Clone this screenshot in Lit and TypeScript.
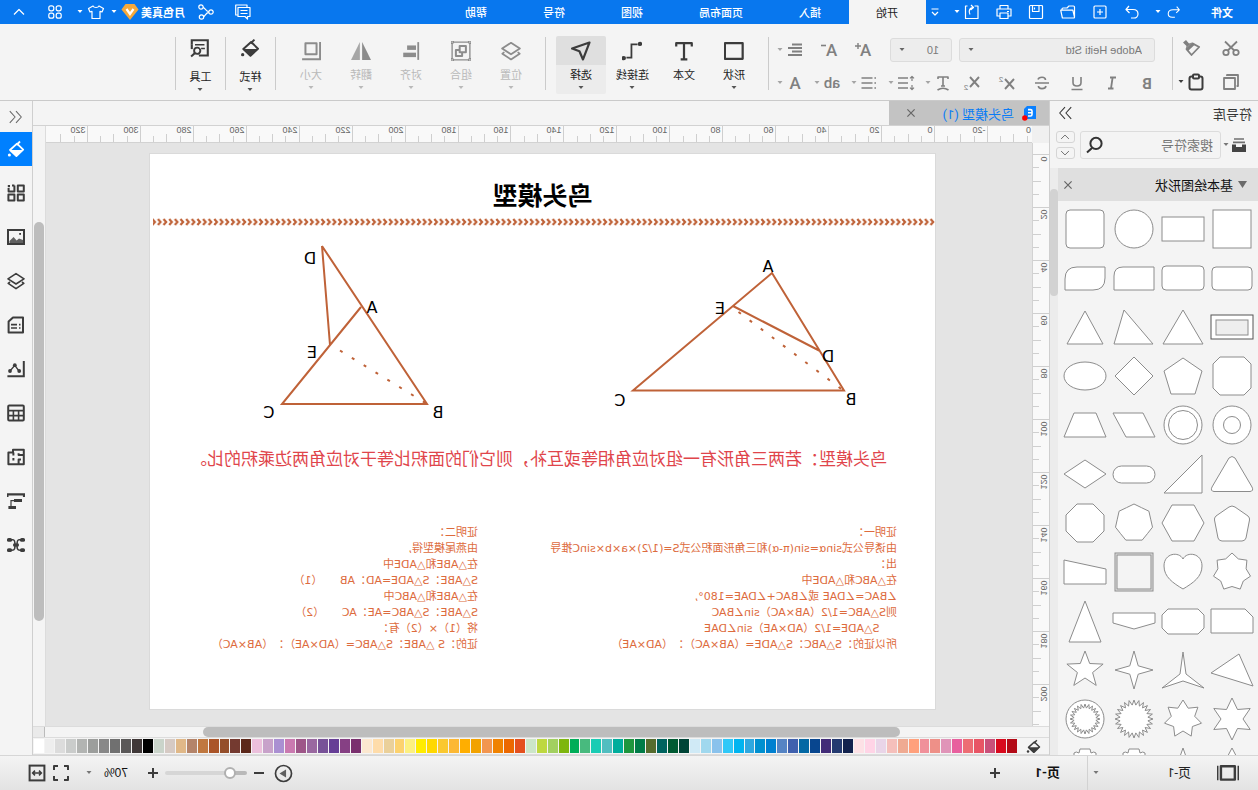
import { LitElement, html, svg, css, nothing } from "lit";
import { customElement, property, state } from "lit/decorators.js";
import { styleMap } from "lit/directives/style-map.js";
import { classMap } from "lit/directives/class-map.js";

/* ---------- icons ---------- */

const line = (w = 1.5) => (body: unknown) => svg`<g fill="none" stroke="currentColor" stroke-width=${w} stroke-linejoin="round">${body}</g>`;
const thin = line(1.2);
const mid = line(1.6);
const bold = line(2);

const bucket = svg`
  <path d="M5 1.5 L8.5 5" fill="none" stroke="currentColor" stroke-width="1.8"/>
  <path d="M8 3.6 L15 10 L8.6 16 L1.8 9.6 Z" fill="none" stroke="currentColor" stroke-width="1.8" stroke-linejoin="round"/>
  <path d="M2 10 H15 L8.6 16.4 Z" fill="currentColor"/>
  <circle cx="15.6" cy="15" r="1.5" fill="currentColor"/>`;

const layers = mid(svg`<path d="M9 1.6 L17 6.8 L9 12 L1 6.8 Z"/><path d="M3 10 L1.2 11.4 L9 16.6 L16.8 11.4 L15 10"/>`);

const letter = (t: string, size = 17, weight = 500) =>
  svg`<text x="9" y="15" text-anchor="middle" font-family="Roboto, sans-serif" font-size=${size} font-weight=${weight} fill="currentColor">${t}</text>`;

const ICONS: Record<string, unknown> = {
  undo: thin(svg`<path d="M6 3 L3 6.5 L6.5 10 M3.4 6.5 H10 C14 6.5 15.5 9 15.5 11 C15.5 13.5 13.5 15 11 15 H8"/>`),
  redo: thin(svg`<path d="M12 3 L15 6.5 L11.5 10 M14.6 6.5 H8 C4 6.5 3 9 3 11 C3 13.5 5 15 7 15 H10"/>`),
  add: thin(svg`<rect x="3" y="3" width="12" height="12" rx="1"/><path d="M9 6 V12 M6 9 H12"/>`),
  folder: thin(svg`<path d="M2.5 14 V4 Q2.5 3 3.5 3 H8 L10 5 H14 Q15 5 15 6 V7 M2.5 14 L4.2 7.2 H16.3 L14.6 15 H3.4 Q2.5 15 2.5 14Z"/>`),
  save: thin(svg`<rect x="2.5" y="2.5" width="13" height="13" rx="1"/><path d="M6 2.8 V8.5 H12.5 V2.8 M10.5 4.4 V6.5"/>`),
  print: thin(svg`<path d="M5 6 V2.5 H13 V6 M5 13 H2 V6 H16 V13 H13"/><rect x="5" y="10" width="8" height="5.5"/><path d="M4 8.5 H6"/>`),
  exporting: thin(svg`<path d="M6.5 3 H3 V15.5 H15.5 V3 H13.5 M10 2 L7.5 4.5 L10.5 7 M8 4.6 C12 4.6 12.5 9 11 11.5"/>`),
  more: thin(svg`<path d="M5.5 6 H12.5 M6 9 L9 12 L12 9"/>`),
  comment: thin(svg`<path d="M2 4.5 H14 V13.5 H7 L4.5 16 V13.5 H2 Z M4.5 7.5 H11.5 M4.5 10.5 H11.5 M5 4.3 V2 H16.3 V12 H14.3"/>`),
  share: thin(svg`<circle cx="4" cy="9" r="2.2"/><circle cx="14" cy="4" r="2.2"/><circle cx="13.5" cy="14" r="2.2"/><path d="M6.2 8.6 C9 8.5 10 5 11.8 4.4 M6.2 9.4 C9 9.6 10 13 11.4 13.6"/>`),
  shirt: thin(svg`<path d="M6 3 C7 5 11 5 12 3 L16.5 5.5 L15 9 L13 8.4 V15.5 H5 V8.4 L3 9 L1.5 5.5 Z"/>`),
  clover: thin(svg`<rect x="2.8" y="2.8" width="5" height="5" rx="2"/><rect x="10.2" y="2.8" width="5" height="5" rx="2"/><rect x="2.8" y="10.2" width="5" height="5" rx="2"/><rect x="10.2" y="10.2" width="5" height="5" rx="2"/>`),
  up: thin(svg`<path d="M4 11.5 L9 6.5 L14 11.5"/>`),
  badge: svg`<path d="M4.5 1 H13.5 L17.5 6.5 L9 17 L0.5 6.5 Z" fill="#f5a93b"/><path d="M5.5 6 L9 11 L12.5 6" fill="none" stroke="#fff" stroke-width="2.2"/>`,
  cut: line(1.8)(svg`<circle cx="4" cy="13.5" r="2.7"/><circle cx="14" cy="13.5" r="2.7"/><path d="M3 2.5 L12.2 11.5 M15 2.5 L5.8 11.5"/>`),
  copy: line(1.8)(svg`<path d="M13 3 V2 H2 V13 H3.4"/><rect x="5" y="5" width="11" height="11"/>`),
  brush: svg`<path d="M12 4.5 L15 1 L18 3.500 L14.500 7 L15.3 9.8 L9 3.4 Z" fill="currentColor"/><path d="M8.6 4.4 L14.5 10.2 L9.5 16 L1.8 8 Z" fill="none" stroke="currentColor" stroke-width="1.8" stroke-linejoin="round"/><path d="M8 4 L15 10.6 L13 12 L6 5.4Z" fill="currentColor"/>`,
  paste: bold(svg`<rect x="2.5" y="3.5" width="13" height="13" rx="2"/><rect x="6" y="1.6" width="6" height="4" rx="1" fill="#f4f4f4"/>`),
  bigger: svg`<text x="7.5" y="15" text-anchor="middle" font-family="Roboto, sans-serif" font-size="17" font-weight="500" fill="currentColor">A</text><path d="M15 2 V8 M12 5 H18" stroke="currentColor" stroke-width="1.4"/>`,
  smaller: svg`<text x="6.5" y="15" text-anchor="middle" font-family="Roboto, sans-serif" font-size="17" font-weight="500" fill="currentColor">A</text><path d="M12 4.5 H17" stroke="currentColor" stroke-width="1.6"/>`,
  align: svg`<path d="M2 4.5 H12 M2 8 H16 M2 11.5 H12 M2 15 H16" stroke="currentColor" stroke-width="1.8" transform="translate(0 -1)"/>`,
  b: letter("B", 15, 700),
  i: line(1.8)(svg`<path d="M5 3.5 H11 M8.4 3.5 L10 14.5 M7.5 14.5 H13"/>`),
  u: mid(svg`<path d="M5 3 V8.5 Q5 12 9 12 Q13 12 13 8.5 V3 M3.5 15.5 H14.5"/>`),
  s: mid(svg`<path d="M13 5.5 Q12.5 3.2 9 3.2 Q5.5 3.2 5.5 6 M5 12 Q5.5 14.6 9 14.6 Q12.6 14.6 12.6 12 M2 9 H16"/>`),
  sup: svg`<path d="M2 5 L11 15 M11 5 L2 15" stroke="currentColor" stroke-width="1.9"/><text x="15" y="8" text-anchor="middle" font-family="Roboto, sans-serif" font-size="8" fill="currentColor">2</text>`,
  sub: svg`<path d="M2 3 L11 13 M11 3 L2 13" stroke="currentColor" stroke-width="1.9"/><text x="15" y="16" text-anchor="middle" font-family="Roboto, sans-serif" font-size="8" fill="currentColor">2</text>`,
  tcolor: mid(svg`<path d="M4 5 V3 H14 V5 M9 3 V12 M7 12 H11 M3.5 16 Q9 12.4 14.5 16"/>`),
  spacing: mid(svg`<path d="M7 4 H17 M7 9 H17 M7 14 H17"/><path stroke-width="1.2" d="M3 2.5 V7 M1 4.4 L3 2.4 L5 4.4 M3 11 V15.5 M1 13.6 L3 15.6 L5 13.6"/>`),
  list: mid(svg`<path d="M5.5 4 H16.5 M5.5 9 H16.5 M5.5 14 H16.5 M2 4 H3.6 M2 9 H3.6 M2 14 H3.6"/>`),
  ab: svg`<text x="9" y="14" text-anchor="middle" font-family="Roboto, sans-serif" font-size="15" font-weight="500" fill="currentColor">ab</text>`,
  acolor: letter("A", 17, 500),
  rect: bold(svg`<rect x="1.2" y="2" width="16" height="14"/>`),
  text: bold(svg`<path d="M2 5 V2 H16 V5 M9 2 V16.5 M6 16.5 H12"/>`),
  connector: svg`<path d="M4 3 H9.5 V15 H14" fill="none" stroke="currentColor" stroke-width="1.6"/><circle cx="1.8" cy="2.6" r="2" fill="currentColor"/><circle cx="16.4" cy="15.4" r="2" fill="currentColor"/>`,
  cursor: bold(svg`<path d="M1.4 1.4 L17 6.8 L10.4 9.2 L7.2 16.6 Z"/>`),
  layers,
  group: thin(svg`<rect x="1" y="1" width="16" height="16"/><path stroke-width="1.8" d="M4.6 4.6 H10.2 V10.2 H4.6 Z M11 8 H13.6 V13.4 H8 V11"/><g fill="#f4f4f4"><circle cx="1" cy="1" r="1.2"/><circle cx="17" cy="1" r="1.2"/><circle cx="1" cy="17" r="1.2"/><circle cx="17" cy="17" r="1.2"/></g>`),
  objalign: svg`<path d="M2.5 1 V17" stroke="currentColor" stroke-width="1.6"/><rect x="4.5" y="4" width="8" height="4" fill="currentColor"/><rect x="4.5" y="10.5" width="11.5" height="4" fill="currentColor"/>`,
  flip: svg`<path d="M8 1 V17 H0 Z" fill="currentColor"/><path d="M10 1 V17 H18 Z" fill="currentColor" opacity=".75"/>`,
  size: line(1.8)(svg`<rect x="4" y="2" width="10" height="10"/><path d="M0.8 1 V16.5 H17"/>`),
  bucket,
  tools: svg`<path d="M10 15.8 H2 V2 H16.4 V6" fill="none" stroke="currentColor" stroke-width="1.9"/><path d="M16.4 6 V10" stroke="currentColor" stroke-width="1.9"/><path d="M5 6 H13.5 M4.6 9.5 H8" stroke="currentColor" stroke-width="1.4"/><circle cx="11.5" cy="11.5" r="2.8" fill="none" stroke="currentColor" stroke-width="1.7"/><path d="M13.5 13.5 L17 16.6" stroke="currentColor" stroke-width="1.9"/>`,
  fwd: thin(svg`<path d="M2 2.500 L8 9 L2 15.500 M9 2.500 L15 9 L9 15.500"/>`),
  back: thin(svg`<path d="M16 2.500 L10 9 L16 15.500 M9 2.500 L3 9 L9 15.500"/>`),
  library: svg`<path d="M4 3 H14 M3 6.4 H15" stroke="currentColor" stroke-width="1.6" opacity=".75"/><path d="M2 8.6 H6 V11 H12 V8.6 H16 V16 H2 Z" fill="currentColor"/>`,
  search: bold(svg`<circle cx="8" cy="7.4" r="5.6"/><path d="M12 12 L17 16.6"/>`),
  close: thin(svg`<path d="M5.4 5.4 L12.6 12.6 M12.6 5.4 L5.4 12.6"/>`),
  modules: bold(svg`<rect x="1.2" y="1.6" width="6" height="6"/><path d="M10.6 1.6 H13 M16.4 4 V7.6 H10.6 V1.6"/><rect x="15" y="1" width="2.2" height="2.2" fill="currentColor" stroke="none"/><rect x="1.2" y="10.6" width="6" height="6"/><rect x="10.6" y="10.6" width="6" height="6"/>`),
  image: svg`<rect x="1" y="2" width="16" height="14" fill="none" stroke="currentColor" stroke-width="2"/><path d="M2 15 V12 L6 10.4 L8.4 12.4 L11.4 9 L15.5 13 V15 Z" fill="currentColor" opacity=".8"/><rect x="4" y="5" width="1.8" height="1.8" fill="currentColor"/>`,
  sheet: mid(svg`<path stroke-width="2" d="M2 1.6 H12 L16.4 5.6 V16.4 H2 Z"/><path d="M8 8.6 H14 M8 12 H14 M4.5 8.6 H6 M4.5 12 H6"/>`),
  chart: svg`<path d="M1.2 1 V16.2 H17.6" fill="none" stroke="currentColor" stroke-width="2"/><path d="M6 11 L10.2 5.4 L15 11" fill="none" stroke="currentColor" stroke-width="1.3"/><circle cx="5.8" cy="11" r="1.9" fill="currentColor"/><circle cx="10.2" cy="5.2" r="1.9" fill="currentColor"/><circle cx="15" cy="11" r="1.9" fill="currentColor"/>`,
  table: mid(svg`<rect x="1.2" y="1.6" width="15.6" height="15" rx="1" stroke-width="2"/><path d="M1 6.6 H17 M1 11.6 H17 M6.4 6.6 V16.6 M11.6 6.6 V16.6"/>`),
  plan: bold(svg`<path d="M1.2 1.8 H12 V4.4 H16.6 V16.2 H1.2 Z M1.2 7 H6.4 V5.2 M6.4 16 V11.4 H4 M11.6 4.4 V7.4 M11.6 10 V12.6"/>`),
  gantt: svg`<path d="M1 5 V2.4 H17.6 V5" fill="none" stroke="currentColor" stroke-width="2.2"/><path d="M3 8.6 H11 M9 15.4 H16.6" stroke="currentColor" stroke-width="3"/><path d="M11 8.6 H14 V14" fill="none" stroke="currentColor" stroke-width="1.2"/>`,
  mind: svg`<path d="M3 3.8 H6 C8 3.8 8 6 8 9 C8 12 8 14.2 5 14.2 H3 M15 3.8 H12 C10 3.8 10 6 10 9 C10 12 10 14.2 13 14.2 H15 M6 9 H12" fill="none" stroke="currentColor" stroke-width="1.6"/><g fill="currentColor"><rect x="0" y="2" width="5" height="3.8" rx="1.6"/><rect x="13" y="2" width="5" height="3.8" rx="1.6"/><rect x="0" y="12.2" width="5" height="3.8" rx="1.6"/><rect x="13" y="12.2" width="5" height="3.8" rx="1.6"/><rect x="6.5" y="7.4" width="5" height="3.2"/></g>`,
  pages: bold(svg`<rect x="3.4" y="3.4" width="11.4" height="11"/><path stroke-width="1.6" d="M0.4 3 V15 M17.6 3 V15"/>`),
  plus: bold(svg`<path d="M9 4 V14 M4 9 H14"/>`),
  minus: bold(svg`<path d="M4 9 H14"/>`),
  play: svg`<circle cx="9" cy="9" r="7.6" fill="none" stroke="currentColor" stroke-width="1.6"/><path d="M6.6 5.2 L12.8 9 L6.6 12.8 Z" fill="currentColor" opacity=".8"/>`,
  fit: bold(svg`<path d="M2 6 V2 H6 M12 2 H16 V6 M16 12 V16 H12 M6 16 H2 V12"/>`),
  fitwidth: svg`<rect x="1.6" y="1.6" width="14.8" height="14.8" fill="none" stroke="currentColor" stroke-width="2"/><path d="M5 9 H13 M7 6.6 L4.6 9 L7 11.4 M11 6.6 L13.4 9 L11 11.4" fill="none" stroke="currentColor" stroke-width="1.5"/>`,
};

const icon = (name: string, size = 18) =>
  html`<svg width=${size} height=${size} viewBox="0 0 18 18" aria-hidden="true">${ICONS[name]}</svg>`;

const caret = html`<svg class="caret" width="6" height="4" viewBox="0 0 6 4" aria-hidden="true"><path d="M0.5 0 H5.500 L3 3 Z" fill="currentColor"/></svg>`;

/* ---------- gallery shapes, drawn round the origin ---------- */

const poly = (pts: string) => svg`<polygon points=${pts}/>`;
const radial = (n: number, outer: number, inner: number) => {
  const out: string[] = [];
  for (let k = 0; k < n * 2; k++) {
    const r = k % 2 ? inner : outer;
    const a = (Math.PI * k) / n;
    out.push(`${(Math.sin(a) * r).toFixed(1)},${(-Math.cos(a) * r).toFixed(1)}`);
  }
  return poly(out.join(" "));
};
const regular = (n: number, r: number) => radial(n, r, r * Math.cos(Math.PI / n));
const gear = svg`<path d="M-19 2 V-8 L-11 -9 L-11 -15 Q-9 -17 -6 -15 L-5 -19 H5 L6 -15 Q9 -17 11 -15 L11 -9 L19 -8 V2 Z"/>`;

const SHAPES: unknown[] = [
  svg`<rect x="-19" y="-19" width="38" height="38"/>`,
  svg`<rect x="-21" y="-12" width="42" height="24"/>`,
  svg`<circle r="19"/>`,
  svg`<rect x="-19" y="-19" width="38" height="38" rx="4"/>`,
  svg`<rect x="-20" y="-11" width="40" height="23" rx="4"/>`,
  svg`<rect x="-21" y="-12" width="42" height="24" rx="4"/>`,
  svg`<path d="M-20 -11 H11 Q20 -11 20 -2 V12 H-20 Z"/>`,
  svg`<path d="M-20 -11 H8 Q20 -11 20 1 V12 H-8 Q-20 12 -20 0 Z"/>`,
  svg`<rect x="-21" y="-12" width="42" height="24" stroke="#555"/><rect x="-16" y="-7" width="32" height="15" fill="#eee"/>`,
  poly("0,-17 20,17 -20,17"),
  poly("10,-17 20,17 -19,17"),
  poly("0,-16 18,17 -18,17"),
  poly("-12,-19 12,-19 19,-12 19,12 12,19 -12,19 -19,12 -19,-12"),
  poly("0,-18 19,-5 12,18 -12,18 -19,-5"),
  poly("0,-19 19,0 0,19 -19,0"),
  svg`<ellipse rx="21" ry="14"/>`,
  svg`<circle r="19"/><circle r="8.5"/>`,
  svg`<circle r="19"/><circle r="14.5"/>`,
  poly("21,-12 -9,-12 -21,12 8,12"),
  poly("-11,-12 11,-12 21,12 -21,12"),
  svg`<path d="M-3 -16 Q0 -19 3 -16 L20 13 Q22 17 18 17.500 H-18 Q-22 17 -20 13 Z"/>`,
  poly("-19,-19 -19,19 19,19"),
  svg`<rect x="-21" y="-8" width="42" height="17" rx="8.500"/>`,
  poly("0,-14 21,0 0,14 -21,0"),
  svg`<path d="M-3 -16 Q0 -18 3 -16 L16 -7 Q18 -5 17.500 -3 L14 15 Q13 18 10 18 H-10 Q-13 18 -14 15 L-17.500 -3 Q-18 -5 -16 -7 Z"/>`,
  poly("-11,-18 11,-18 21,0 11,18 -11,18 -21,0"),
  regular(7, 19),
  poly("-8,-19 8,-19 19,-8 19,8 8,19 -8,19 -19,8 -19,-8"),
  radial(7, 19, 14.5),
  svg`<path d="M0 17 C-10 11 -19 5 -19 -6 C-19 -19 -4 -21 0 -13 C4 -21 19 -19 19 -6 C19 5 10 11 0 17 Z"/>`,
  svg`<rect x="-19" y="-19" width="38" height="38" fill="#e4e4e4"/><rect x="-17" y="-17" width="34" height="34" fill="#f4f4f4"/>`,
  poly("21,-12 -21,-3 -21,12 21,12"),
  poly("-13,-12 21,-12 21,12 -21,12 -21,-4"),
  poly("-15,-12 15,-12 21,-6 21,7 15,13 -15,13 -21,7 -21,-6"),
  poly("-21,-8 21,-8 21,2 0,8 -21,2"),
  poly("0,-20 16,21 -16,21"),
  poly("-7,-16 -21,16 21,3"),
  poly("0,-18 3,4 21,18 0,11 -21,18 -3,4"),
  radial(4, 19, 6),
  radial(5, 19, 8),
  radial(6, 21, 11),
  radial(7, 19, 12),
  radial(24, 19, 14),
  svg`<circle r="19"/>${radial(24, 15, 11)}`,
  radial(6, 20, 11),
  radial(5, 20, 8),
  gear,
  gear,
];

const SWATCHES = (
  "b30a17 d80a1e c9507a e85565 ed6d74 e8609e e094b8 ee9088 f0909a ffa07c efaa92 f5bfbb e9d5e8 ffd4e6 fde1e6 " +
  "12224e 243a70 422c78 08468f 0468a4 3f60ae 5584c4 0080d0 0090d0 2ea8e0 00b4f0 30c8f8 8ac2ec a0d8ee d0eaf6 " +
  "004436 005a32 00645f 566c2e 007c48 1e963e 00ad9c 52bec0 1accb4 48ba7e " +
  "00ad58 7eb60e a2d060 bed840 cce6c8 e4501e ec6800 f08200 f29650 f2a200 ffae00 fcb834 fac830 ffd800 ffec00 " +
  "fcf080 fcd26e ead09a fedcaa fce8d0 7a306e 864084 663e96 785298 9a68a0 9e5688 ca7ab0 aa90d2 c8a2ca ecc0dc " +
  "5c281a 743a30 944e2a aa5428 c07840 b4846a e0b888 d6cac4 cad4ca 000000 403838 5a5858 707070 888888 9c9e9c " +
  "b2b4b2 cacccb dcdcdc eeeeee ffffff"
).split(" ");

const base = css`
  * { box-sizing: border-box; }
  button {
    font: inherit; color: inherit; background: none; border: 0; padding: 0; margin: 0;
    display: inline-flex; align-items: center; justify-content: center;
  }
  svg { display: block; flex: none; }
`;

/* ---------- title bar ---------- */

@customElement("title-bar")
class TitleBar extends LitElement {
  static styles = [base, css`
    :host { display: flex; height: 24px; background: #0877ee; color: #fff; font-size: 11px; }
    button { height: 24px; }
    .file { width: 72px; font-weight: 700; }
    .undo { width: 24px; }
    .drop { width: 8px; }
    .icons { display: flex; margin-left: 6px; }
    .icons button { width: 32px; }
    .after { margin-left: -5px; }
    .more { width: 18px; margin: 0 0 0 9px; }
    .tabs { display: flex; }
    .tabs button { padding: 0 28px; font-weight: 500; }
    .tabs .on { background: #f4f4f4; color: #222; padding: 0 27px 0 28px; font-weight: 400; }
    .end { display: flex; margin-left: auto; padding-right: 10px; }
    .end .wide { width: 37px; }
    .user { gap: 2px; font-weight: 700; margin-left: 3px; }
    .end .drop { margin: 0 5px 0 3px; }
    .grid { margin: 0 18px 0 7px; }
  `];
  render() {
    return html`
      <button class="file">文件</button>
      <button class="undo" aria-label="撤销">${icon("undo", 16)}</button>
      <button class="drop" aria-label="撤销列表">${caret}</button>
      <div class="icons">
        ${["redo", "add", "folder", "save", "print", "exporting"].map((n) => html`<button aria-label=${n}>${icon(n)}</button>`)}
      </div>
      <button class="drop after" aria-label="导出选项">${caret}</button>
      <button class="more" aria-label="更多">${icon("more")}</button>
      <nav class="tabs">
        ${["开始", "插入", "页面布局", "视图", "符号", "帮助"].map((t, k) => html`<button class=${k ? "" : "on"}>${t}</button>`)}
      </nav>
      <div class="end">
        <button class="wide" aria-label="评论">${icon("comment")}</button>
        <button class="wide" aria-label="分享">${icon("share")}</button>
        <button class="user">月色真美${icon("badge")}</button>
        <button class="drop" aria-label="账户">${caret}</button>
        <button aria-label="皮肤">${icon("shirt")}</button>
        <button class="drop" aria-label="皮肤选项">${caret}</button>
        <button class="grid" aria-label="应用">${icon("clover")}</button>
        <button aria-label="收起">${icon("up")}</button>
      </div>`;
  }
}

/* ---------- ribbon ---------- */

@customElement("ribbon-bar")
class RibbonBar extends LitElement {
  static styles = [base, css`
    :host { display: flex; height: 77px; background: #f4f4f4; border-bottom: 1px solid #cacaca; color: #808080; font-size: 11px; }
    .rule { width: 1px; height: 53px; margin-top: 13px; background: #cbcbcb; flex: none; }
    .clip { display: grid; grid-template: 24px 24px / 40px 38px; row-gap: 10px; padding: 12px 0 0 7px; }
    .dark { color: #3c3c3c; gap: 3px; }
    .font { padding: 14px 6px 0 7px; }
    .row { display: flex; height: 24px; }
    .row + .row { margin-top: 9px; }
    .row button { width: 35px; }
    .row .drop { width: 37px; justify-content: flex-end; gap: 3px; padding-right: 2px; }
    .row .caret { color: #a5a5a5; }
    .row .first { width: 32px; }
    .field { position: relative; display: flex; align-items: center; }
    .field .caret { position: absolute; right: 9px; color: #666; }
    .family { width: 196px; margin: 0 7px 0 10px; }
    .points { width: 62px; margin-right: 8px; }
    select {
      appearance: none; width: 100%; height: 24px; border: 1px solid #dcdcdc; border-radius: 3px; background: #ededed;
      font: 11px "Liberation Sans", "Noto Sans CJK SC", sans-serif; color: #7a7a7a; padding: 0 12px;
    }
    .group { display: flex; padding: 12px 10px 0 9px; }
    .tight { padding: 12px 0 0; }
    .big { width: 50px; height: 58px; display: flex; flex-direction: column; justify-content: flex-start; padding-top: 5px; color: #3c3c3c; border-radius: 2px; }
    .big .label { line-height: 16px; margin-top: 7px; color: #222; }
    .big .caret { margin-top: 2px; color: #555; }
    .long { width: 53px; }
    .on { background: linear-gradient(#dfdfdf 29px, #ececec 29px); }
    .off, .off .label, .off .caret { color: #b9b9b9; }
    .off svg:first-child { color: #8c8c8c; }
    .tight .big { width: 49px; padding-top: 2px; }
    .tight .label { margin-top: 12px; }
  `];
  private big(name: string, label: string, cls = "") {
    return html`<button class="big ${cls}">${icon(name, 20)}<span class="label">${label}</span>${name === "text" ? nothing : caret}</button>`;
  }
  render() {
    return html`
      <div class="clip">
        <button aria-label="剪切">${icon("cut")}</button>
        <button aria-label="格式刷">${icon("brush")}</button>
        <button aria-label="复制">${icon("copy")}</button>
        <button class="dark" aria-label="粘贴">${icon("paste")}${caret}</button>
      </div>
      <div class="rule"></div>
      <div class="font">
        <div class="row">
          <label class="field family"><select aria-label="字体"><option>Adobe Heiti Std</option></select>${caret}</label>
          <label class="field points"><select aria-label="字号"><option>10</option></select>${caret}</label>
          <button aria-label="增大字号">${icon("bigger")}</button>
          <button aria-label="减小字号">${icon("smaller")}</button>
          <button class="drop" aria-label="对齐">${icon("align")}${caret}</button>
        </div>
        <div class="row">
          ${["b", "i", "u", "s", "sup", "sub"].map((n) => html`<button aria-label=${n}>${icon(n)}</button>`)}
          <button class="drop first" aria-label="文字效果">${icon("tcolor")}${caret}</button>
          ${["spacing", "list", "ab", "acolor"].map((n) => html`<button class="drop" aria-label=${n}>${icon(n)}${caret}</button>`)}
        </div>
      </div>
      <div class="rule"></div>
      <div class="group">
        ${this.big("rect", "形状")}${this.big("text", "文本")}${this.big("connector", "连接线", "long")}${this.big("cursor", "选择", "on")}
      </div>
      <div class="rule"></div>
      <div class="group">
        ${this.big("layers", "位置", "off")}${this.big("group", "组合", "off")}${this.big("objalign", "对齐", "off")}
        ${this.big("flip", "翻转", "off")}${this.big("size", "大小", "off")}
      </div>
      <div class="rule"></div>
      <div class="group tight">${this.big("bucket", "样式")}</div>
      <div class="rule"></div>
      <div class="group tight">${this.big("tools", "工具")}</div>
      <div class="rule"></div>`;
  }
}

/* ---------- symbol library ---------- */

@customElement("symbol-panel")
class SymbolPanel extends LitElement {
  static styles = [base, css`
    :host { display: grid; grid-template: 30px 37px minmax(0, 1fr) / minmax(0, 1fr); width: 209px; flex: none; background: #f4f4f4; border-right: 1px solid #cfcfcf; font-size: 13px; color: #333; }
    header { display: flex; align-items: center; justify-content: space-between; padding: 0 7px 6px 6px; }
    .find { display: flex; align-items: flex-start; padding: 0 6px 0 10px; }
    .lib { height: 28px; gap: 1px; color: #444; }
    .lib .caret { color: #777; }
    .box { display: flex; align-items: center; flex: 1; min-width: 0; height: 28px; margin: 0 5px 0 2px; border: 1px solid #dcdcdc; border-radius: 3px; padding: 0 5px 0 7px; background: #f4f4f4; color: #333; }
    .box input { flex: 1; min-width: 0; border: 0; background: none; font: inherit; padding: 0; outline: 0; }
    .box input::placeholder { color: #777; opacity: 1; }
    .step { display: grid; gap: 4px; }
    .step button { width: 19px; height: 12px; border: 1px solid #d5d5d5; border-radius: 3px; color: #666; }
    .down svg { rotate: 180deg; }
    .body { display: grid; grid-template-columns: minmax(0, 1fr) 8px; min-height: 0; }
    .list { display: flex; flex-direction: column; min-height: 0; overflow: hidden; }
    .cat { display: flex; align-items: center; flex: none; height: 33px; background: #dfdfdf; padding: 0 1px 0 11px; gap: 5px; color: #111; }
    .cat span { flex: 1; }
    .cat button { color: #666; }
    .tri { color: #6a6a6a; }
    .shapes { display: grid; grid-template-columns: repeat(4, 49px); grid-auto-rows: 49px; padding: 3px 0 0 1px; min-height: 0; overflow: hidden; }
    .shapes button { width: 49px; height: 49px; }
    .shapes svg { fill: #fff; stroke: #8c8c8c; stroke-width: 1; }
    .track { background: #ececec; }
    .thumb { height: 107px; margin-top: 21px; border-radius: 4px; background: #d2d2d2; }
  `];
  render() {
    return html`
      <header><span>符号库</span><button aria-label="收起面板">${icon("fwd", 16)}</button></header>
      <div class="find">
        <button class="lib" aria-label="符号库">${icon("library")}${caret}</button>
        <label class="box"><input type="text" placeholder="搜索符号" aria-label="搜索符号">${icon("search")}</label>
        <div class="step">
          <button aria-label="上一个">${icon("up", 14)}</button>
          <button class="down" aria-label="下一个">${icon("up", 14)}</button>
        </div>
      </div>
      <div class="body">
        <div class="list">
          <div class="cat">
            <svg class="tri" width="9" height="7" viewBox="0 0 9 7"><path d="M0 0 H9 L4.5 7 Z" fill="currentColor"/></svg>
            <span>基本绘图形状</span><button aria-label="关闭">${icon("close")}</button>
          </div>
          <div class="shapes">
            ${SHAPES.map((s, k) => html`<button aria-label="形状 ${k + 1}"><svg width="48" height="48" viewBox="-24 -24 48 48">${s}</svg></button>`)}
          </div>
        </div>
        <div class="track"><div class="thumb"></div></div>
      </div>`;
  }
}

/* ---------- drawing page ---------- */

@customElement("drawing-page")
class DrawingPage extends LitElement {
  static styles = [base, css`
    :host { display: block; width: 787px; height: 557px; background: #fff; border: 1px solid #dadada; font-family: "Noto Sans CJK SC", sans-serif; text-spacing-trim: space-all; }
    h1 { margin: 26px 0 0; font-size: 25px; line-height: 28px; font-weight: 700; text-align: center; color: #000; }
    .band { margin-top: 10px; }
    .figures { margin-top: 4px; }
    .figures text { font: 16px "DejaVu Sans", sans-serif; fill: #000; text-anchor: middle; }
    .rulebook { margin: 15px 0 0 48px; font-size: 17px; line-height: 26px; color: #e0454b; white-space: nowrap; }
    .proofs { display: grid; grid-template-columns: 419px 1fr; margin: 54px 0 0 38px; font: 11px "DejaVu Sans", "Noto Sans CJK SC", sans-serif; line-height: 16px; color: #dd6b3d; }
    .proofs p { margin: 0; white-space: pre; }
  `];
  render() {
    return html`
      <h1>鸟头模型</h1>
      <svg class="band" width="785" height="8">
        <defs><pattern id="chev" width="5.64" height="8" patternUnits="userSpaceOnUse">
          <path d="M4.400 1 L1.800 4 L4.400 7" fill="none" stroke="#bf6238" stroke-width="2.2"/></pattern></defs>
        <rect width="782" height="8" fill="url(#chev)"/>
      </svg>
      <svg class="figures" width="785" height="200" viewBox="323 231 785 200">
        <g fill="none" stroke="#bf6238" stroke-width="2">
          <path d="M486 274 L414 391.500 H625 Z M438 352 L525 307"/>
          <path d="M936 247 L831 405 H976 L897 308 M936 247 L928 346"/>
          <path d="M519.500 313 L414 392" stroke-dasharray="3 10.9"/>
          <path d="M918 351.500 L831 405" stroke-dasharray="3 10.9"/>
        </g>
        <text x="490" y="273">A</text><text x="538" y="315">E</text><text x="430" y="363">D</text>
        <text x="407" y="406">B</text><text x="638" y="407">C</text>
        <text x="948" y="265">D</text><text x="886" y="314">A</text><text x="946" y="359">E</text>
        <text x="820" y="419">B</text><text x="989" y="419">C</text>
      </svg>
      <div class="rulebook">鸟头模型：若两三角形有一组对应角相等或互补，则它们的面积比等于对应角两边乘积的比。</div>
      <div class="proofs">
        <p>${[
          "证明一：",
          "由诱导公式sinα=sin(π-α)和三角形面积公式S=(1/2)×a×b×sinC推导",
          "出：",
          "在△ABC和△ADE中",
          "∠BAC=∠DAE 或∠BAC+∠DAE=180°,",
          "则S△ABC=1/2（AB×AC）sin∠BAC",
          "     S△ADE=1/2（AD×AE）sin∠DAE",
          "所以证的：S△ABC：S△ADE=（AB×AC）：（AD×AE）",
        ].join("\n")}</p>
        <p>${[
          "证明二：",
          "由燕尾模型得,",
          "在△ABE和△ADE中",
          "S△ABE：S△ADE=AD：AB     （1）",
          "在△ABE和△ABC中",
          "S△ABE：S△ABC=AE：AC     （2）",
          "将（1）×（2）有：",
          "证的：S △ABE：S△ABC=（AD×AE）：（AB×AC）",
        ].join("\n")}</p>
      </div>`;
  }
}

/* ---------- rulers ---------- */

@customElement("page-ruler")
class PageRuler extends LitElement {
  @property({ type: Boolean, reflect: true }) vertical = false;
  static styles = [base, css`
    :host { display: block; overflow: hidden; background: #f9f9f9; min-width: 0; min-height: 0; }
    text { font: 9px "Liberation Sans", sans-serif; fill: #666; }
    path { stroke: #cfcfcf; stroke-width: 1; fill: none; }
  `];
  render() {
    const out: unknown[] = [];
    if (this.vertical) {
      for (let q = 0; q < 44; q++) {
        const at = Math.round(11 + (q * 53) / 4) + 0.5;
        const major = q % 4 === 0;
        const len = major ? 17 : q % 2 ? 7 : 9;
        out.push(svg`<path d="M${17 - len} ${at} H17"/>`);
        if (major && q <= 40) out.push(svg`<text text-anchor="end" transform="translate(8 ${at + 2}) rotate(-90)">${q * 5}</text>`);
      }
      return html`<svg width="17" height="600">${out}</svg>`;
    }
    for (let q = -7; q < 67; q++) {
      const at = Math.round(97 + q * 13.235) + 0.5;
      const major = q % 4 === 0;
      const len = major ? 17 : q % 2 ? 7 : 9;
      out.push(svg`<path d="M${at} ${17 - len} V17"/>`);
      if (major && q <= 64) out.push(svg`<text x=${at + 2} y="7">${q * 5}</text>`);
    }
    out.push(svg`<text x="1" y="7">0</text>`);
    return html`<svg width="986" height="17">${out}</svg>`;
  }
}

/* ---------- editor ---------- */

@customElement("editor-area")
class EditorArea extends LitElement {
  static styles = [base, css`
    :host { display: grid; grid-template-rows: 25px minmax(0, 1fr) 12px 17px; flex: 1; min-width: 0; background: #f4f4f4; }
    .tabs { display: flex; border-bottom: 1px solid #d2d2d2; }
    .tab { display: flex; align-items: center; width: 160px; height: 24px; background: #c3c3c3; color: #0a7cf5; font-size: 13px; padding: 0 13px 0 13px; gap: 8px; }
    .tab a { flex: 1; color: inherit; text-decoration: none; white-space: nowrap; }
    .tab button { color: #666; }
    .work { display: grid; grid-template: 17px minmax(0, 1fr) / 17px minmax(0, 1fr) 13px; min-height: 0; }
    .corner { background: #f0f0f0; }
    .top { border-bottom: 1px solid #d2d2d2; }
    .side { border-right: 1px solid #d2d2d2; }
    .vbar { grid-area: 1 / 3 / 3 / 4; border-left: 1px solid #dcdcdc; padding: 96px 1px 0; }
    .vthumb { height: 399px; border-radius: 5px; background: #bdbdbd; }
    .view { background: #e4e4e4; overflow: hidden; padding: 10px 0 0 96px; min-width: 0; }
    .hbar { display: flex; justify-content: space-between; border: solid #dcdcdc; border-width: 1px 0; padding-left: 149px; }
    .hthumb { width: 697px; height: 10px; border-radius: 5px; background: #bdbdbd; }
    .end { width: 12px; border-left: 1px solid #bbb; background: #eaeaea; }
    .palette { display: flex; align-items: center; color: #3c3c3c; padding-left: 8px; border-bottom: 1px solid #dcdcdc; }
    .colors { display: flex; gap: 1px; flex: 1; margin-left: 9px; }
    .colors button { flex: 1; min-width: 0; height: 14px; }
  `];
  render() {
    return html`
      <div class="tabs"><div class="tab">
        <svg width="14" height="15" viewBox="0 0 14 15"><path d="M0 0 H9 L12 3 V13 H0 Z" fill="#0a80ff"/><path d="M8 3.600 H5.500 Q4 3.600 4 5 V8.500 Q4 10 5.500 10 H8 M4 6.800 H8" fill="none" stroke="#fff" stroke-width="1.600"/><circle cx="11.200" cy="12" r="2.700" fill="#f00"/></svg>
        <a href="#doc">鸟头模型 (1)</a><button aria-label="关闭文档">${icon("close")}</button>
      </div></div>
      <div class="work">
        <div class="corner"></div>
        <page-ruler class="top"></page-ruler>
        <page-ruler class="side" vertical></page-ruler>
        <div class="view"><drawing-page></drawing-page></div>
        <div class="vbar"><div class="vthumb"></div></div>
      </div>
      <div class="hbar"><div class="hthumb"></div><div class="end"></div></div>
      <div class="palette">
        ${icon("bucket", 15)}
        <div class="colors">${SWATCHES.map((c) => html`<button aria-label="#${c}" style=${styleMap({ background: `#${c}` })}></button>`)}</div>
      </div>`;
  }
}

/* ---------- application ---------- */

@customElement("app-root")
class AppRoot extends LitElement {
  @state() private tool = "bucket";
  static styles = [base, css`
    :host {
      display: flex; flex-direction: column; height: 100vh; min-height: 400px; overflow: hidden; transform: scaleX(-1);
      font-family: Roboto, "Noto Sans CJK SC", sans-serif; background: #f4f4f4; color: #222;
    }
    title-bar, ribbon-bar { flex: none; }
    main { display: flex; flex: 1; min-height: 0; }
    .tools { display: flex; flex-direction: column; width: 33px; flex: none; border-left: 1px solid #cfcfcf; color: #3c3c3c; }
    .tools .hide { height: 31px; color: #666; }
    .tools .tool { height: 44px; flex: none; }
    .tools .on { height: 34px; margin-bottom: 5px; background: #0080ff; color: #fff; }
    footer { display: flex; align-items: center; flex: none; height: 35px; border-top: 1px solid #d6d6d6; background: linear-gradient(#f4f4f4, #e3e3e3); font-size: 13px; line-height: 18px; color: #3c3c3c; }
    .pages { display: flex; align-items: center; width: 171px; height: 34px; padding: 0 5px 0 19px; border-right: 1px solid #d2d2d2; }
    .pages .name { margin: 0 auto 0 26px; color: #222; }
    .pages .caret, .zoom .caret { color: #777; }
    .current { margin-left: 27px; font-weight: 700; color: #111; }
    .add { margin-left: 29px; width: 20px; }
    .zoom { display: flex; align-items: center; margin-left: auto; padding-right: 28px; }
    .less { margin-left: 6px; }
    input[type="range"] { appearance: none; width: 82px; height: 12px; margin: 0 3px; background: none; }
    input[type="range"]::-webkit-slider-runnable-track { height: 4px; border-radius: 2px; background: linear-gradient(90deg, #b9b9b9 20%, #d6d6d6 20%); }
    input[type="range"]::-webkit-slider-thumb { appearance: none; width: 12px; height: 12px; margin-top: -4px; border-radius: 50%; border: 2px solid #b0b0b0; background: #fff; }
    .value { margin: 0 12px 0 16px; font: 12px "Liberation Sans", sans-serif; color: #111; }
    .fit { margin: 0 6px 0 16px; }
  `];
  render() {
    const tools = ["bucket", "modules", "image", "layers", "sheet", "chart", "table", "plan", "gantt", "mind"];
    return html`
      <title-bar></title-bar>
      <ribbon-bar></ribbon-bar>
      <main>
        <symbol-panel></symbol-panel>
        <editor-area></editor-area>
        <aside class="tools">
          <button class="hide" aria-label="展开">${icon("back", 16)}</button>
          ${tools.map((t) => html`<button class=${classMap({ tool: true, on: t === this.tool })} aria-label=${t} @click=${() => (this.tool = t)}>${icon(t)}</button>`)}
        </aside>
      </main>
      <footer>
        <div class="pages"><button aria-label="页面视图">${icon("pages", 22)}</button><button class="name">页-1</button>${caret}</div>
        <button class="current">页-1</button>
        <button class="add" aria-label="新建页">${icon("plus")}</button>
        <div class="zoom">
          <button aria-label="播放">${icon("play", 19)}</button>
          <button class="less" aria-label="缩小">${icon("minus")}</button>
          <input type="range" aria-label="缩放" min="0" max="100" value="16">
          <button aria-label="放大">${icon("plus")}</button>
          <span class="value">70%</span>${caret}
          <button class="fit" aria-label="适合页面">${icon("fit")}</button>
          <button aria-label="适合宽度">${icon("fitwidth")}</button>
        </div>
      </footer>`;
  }
}
